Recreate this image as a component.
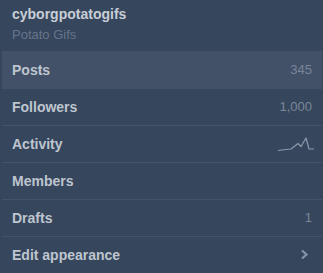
import React from "react";

const rows: { label: string; right?: string; kind?: "spark" | "chev"; active?: boolean }[] = [
  { label: "Posts", right: "345", active: true },
  { label: "Followers", right: "1,000" },
  { label: "Activity", kind: "spark" },
  { label: "Members" },
  { label: "Drafts", right: "1" },
  { label: "Edit appearance", kind: "chev" },
];

export default function App() {
  return (
    <div
      className="w-[323px] h-[273px] bg-[#36465d] overflow-hidden"
      style={{ fontFamily: '"Liberation Sans", Arial, sans-serif' }}
    >
      <div className="h-[51px] pl-[12px] pt-[7px]">
        <div className="text-[14px] leading-[15px] font-bold text-[#c8ced6]">cyborgpotatogifs</div>
        <div className="text-[13px] leading-[15px] mt-[5px] text-[#66758b]">Potato Gifs</div>
      </div>
      <div className="pl-[2px] pr-[1px]">
        {rows.map((r, i) => (
          <div
            key={r.label}
            className={
              (r.active ? "bg-[#435168] h-[38px] " : "h-[37px] ") +
              (i >= 1 && i < rows.length - 1 ? "border-b border-[#44536a] " : "") +
              "flex items-center justify-between pl-[10px] pr-[10px]"
            }
          >
            <span className="text-[14px] font-bold text-[#bec5cf]">{r.label}</span>
            {r.right && <span className="text-[13px] text-[#7a869a]">{r.right}</span>}
            {r.kind === "spark" && (
              <svg width="38" height="16" viewBox="0 0 38 16" className="mr-[-3px] mt-[2px]">
                <polyline
                  points="1,13.5 9,12.5 14,12 21,6.5 24,9.5 29,1 32,12 37,12"
                  fill="none"
                  stroke="#8e9aab"
                  strokeWidth="1.2"
                  strokeLinejoin="round"
                />
              </svg>
            )}
            {r.kind === "chev" && (
              <svg width="9" height="11" viewBox="0 0 9 11" className="mr-[3px] mt-[-3px]">
                <polyline points="2,1.5 6.5,5.5 2,9.5" fill="none" stroke="#8793a6" strokeWidth="2.2" />
              </svg>
            )}
          </div>
        ))}
      </div>
    </div>
  );
}
